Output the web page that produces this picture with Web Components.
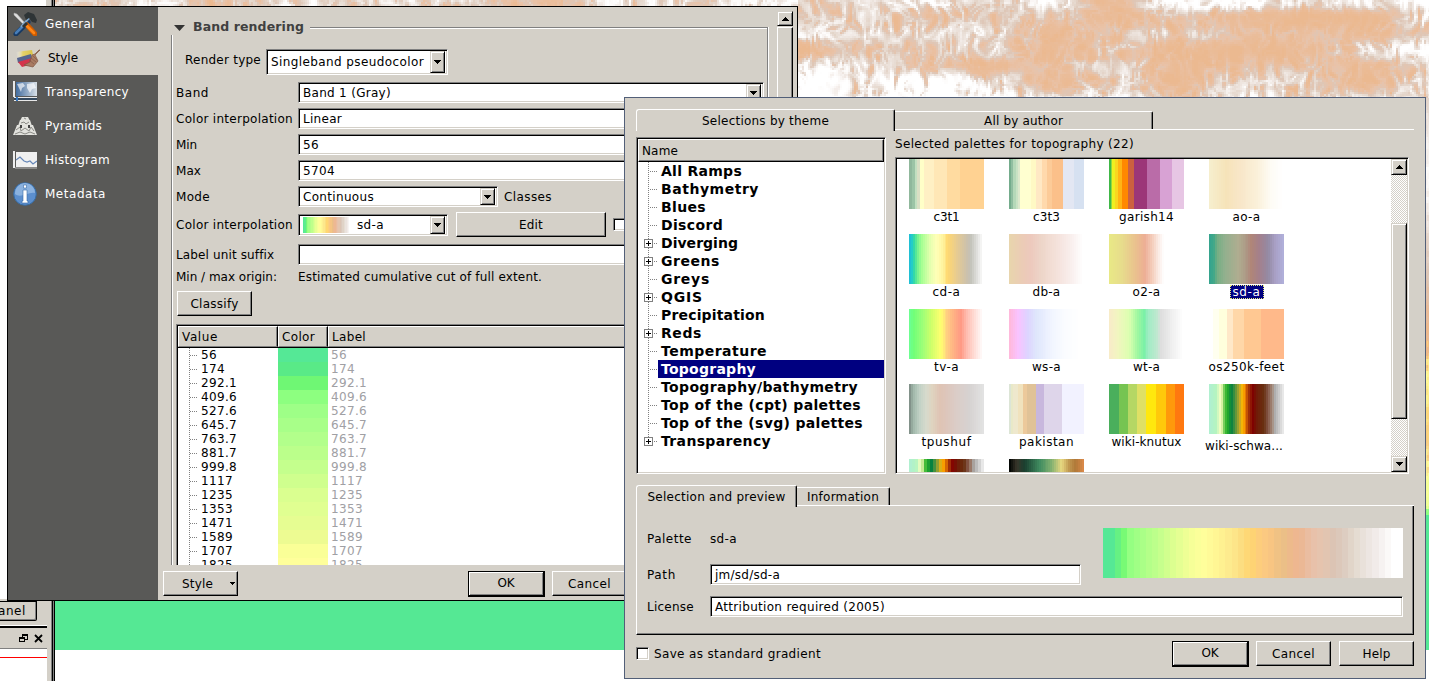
<!DOCTYPE html>
<html lang="en">
<head>
<meta charset="utf-8">
<title>Layer properties</title>
<style>
html,body{margin:0;height:100%;overflow:hidden;background:#fff}
body{font:12px/14px "DejaVu Sans",sans-serif;color:#000}
</style>
</head>
<body>
<gis-desktop></gis-desktop>
<script>
const define=(name,html,ready)=>{
  const t=document.createElement('template');t.innerHTML=html;
  customElements.define(name,class extends HTMLElement{
    connectedCallback(){
      if(this.shadowRoot)return;
      this.attachShadow({mode:'open'}).append(t.content.cloneNode(true));
      if(ready)ready.call(this,this.shadowRoot);
    }
  });
};
const SUNK='border:1px solid;border-color:#808080 #fff #fff #808080;box-shadow:inset 1px 1px #000,inset -1px -1px #d4d0c8;';
const RAISED='border:1px solid;border-color:#fff #000 #000 #fff;box-shadow:inset -1px -1px #808080;';
const hex=c=>[1,3,5].map(i=>parseInt(c.substr(i,2),16));
const sample=(stops,p)=>{
  for(let i=1;i<stops.length;i++)if(p<=stops[i][1]){
    const a=stops[i-1],b=stops[i],f=(p-a[1])/((b[1]-a[1])||1),x=hex(a[0]),y=hex(b[0]);
    return x.map((v,k)=>Math.round(v+(y[k]-v)*f));
  }
  return hex(stops[stops.length-1][0]);
};
const SDA='#55e896 0,#55e896 2,#74f973 6,#93ff82 8,#adff88 13,#c2ff8c 18,#dcff90 23,#f6ff98 29,#ffff9c 33,#fff795 37,#fde88c 43,#fcdd80 46,#ffd570 49,#fccb80 53,#f9c582 56,#eac086 60,#efb78e 64,#ebb896 67,#e9c0a8 70,#e5c6b0 74,#dcc4b4 77,#dcccc0 81,#e4dbd0 85,#eae2dc 88,#f2ecea 92,#fbfaf9 96,#ffffff 97,#ffffff 100';

/* letter-spaced label: w is its advance width in pixels */
define('fit-text','<style>:host{display:inline-block;white-space:pre;flex:none}</style><slot></slot>',function(){
  const w=+this.getAttribute('w');if(!w)return;
  const r=document.createRange();r.selectNodeContents(this);
  this.style.letterSpacing=((w-r.getBoundingClientRect().width)/this.textContent.length).toFixed(3)+'px';
});
/* colour ramp: "smooth" bands are interpolated, "hard" ones start at each stop */
define('color-ramp','<style>:host{display:block;flex:none}</style>',function(){
  const s=(this.getAttribute('stops')||SDA).split(',').map(v=>{const[a,b]=v.trim().split(' ');return[a,+b]});
  const out=[];
  if(this.hasAttribute('hard'))s.forEach((v,i)=>out.push(`${v[0]} ${v[1]}% ${i+1<s.length?s[i+1][1]:100}%`));
  else{const n=+this.getAttribute('steps')||36;
    for(let i=0;i<n;i++)out.push(`rgb(${sample(s,i/(n-1)*100)}) ${i/n*100}% ${(i+1)/n*100}%`);}
  this.style.background=`linear-gradient(90deg,${out})`;
});
define('push-button',`<style>:host{display:flex;box-sizing:border-box;align-items:center;justify-content:center;flex:none;background:#d4d0c8;${RAISED}}
:host([default]){border-color:#000;border-width:1px 2px 2px 1px;box-shadow:inset 1px 1px #fff,inset -1px -1px #808080}</style><slot></slot>`);
define('arrow-box',`<style>:host{display:flex;box-sizing:border-box;flex:none;align-items:center;justify-content:center;width:15px;background:#d4d0c8;border:1px solid;border-color:#d4d0c8 #000 #000 #d4d0c8;box-shadow:inset 1px 1px #fff,inset -1px -1px #808080}
:host([up]) svg{transform:scaleY(-1)}</style><svg width="7" height="4" shape-rendering="crispEdges"><path d="M0 0h7v1H6v1H5v1H4v1H3V3H2V2H1V1H0z"/></svg>`);
define('edit-box',`<style>:host{display:flex;box-sizing:border-box;flex:none;align-items:center;background:#fff;padding:1px 2px 1px 4px;height:21px;${SUNK}}
slot{display:flex;flex:1;align-items:center}arrow-box{align-self:stretch}</style><slot></slot>`,function(r){
  if(this.hasAttribute('combo')){const a=document.createElement('arrow-box');r.append(a)}
});
define('check-box',`<style>:host{display:block;box-sizing:border-box;flex:none;width:13px;height:13px;background:#fff;${SUNK}}</style>`);
define('expand-mark','<style>:host{display:block;width:9px;height:9px}svg{display:block}</style><svg width="9" height="9" shape-rendering="crispEdges"><path d="M0 0h9v9H0z" fill="#808080"/><path d="M1 1h7v7H1z" fill="#fff"/><path d="M2 4h5v1H2zM4 2h1v5H4z"/></svg>');
define('scroll-bar',`<style>:host{display:flex;flex-direction:column;flex:none;width:16px;background:repeating-conic-gradient(#fff 0 25%,#d4d0c8 0 50%) 0 0/2px 2px}
arrow-box{width:16px;height:16px}i{display:block;box-sizing:border-box;background:#d4d0c8;border:1px solid;border-color:#d4d0c8 #000 #000 #d4d0c8;box-shadow:inset 1px 1px #fff,inset -1px -1px #808080}</style>
<arrow-box up></arrow-box><i></i><arrow-box id="d"></arrow-box>`,function(r){
  const i=r.querySelector('i'),g=this.getAttribute('gap');
  i.style.marginTop=g+'px';i.style.height=this.getAttribute('thumb')+'px';r.getElementById('d').style.marginTop='auto';
});

/* shaded relief behind the windows */
define('relief-map','<style>:host{display:block}canvas{display:block;width:1374px;height:650px}</style><canvas width="1374" height="650"></canvas>',function(r){
  const c=r.querySelector('canvas').getContext('2d'),W=1374,H=650;
  c.fillStyle='#55e894';c.fillRect(0,0,W,H);
  const rnd=(x,y)=>{let n=(x*374761393+y*668265263)|0;n=Math.imul(n^(n>>>13),1274126177);return((n^(n>>>16))>>>0)/4294967296};
  const sm=t=>t*t*(3-2*t);
  const noise=(x,y)=>{const a=Math.floor(x),b=Math.floor(y),u=sm(x-a),v=sm(y-b);
    return (rnd(a,b)*(1-u)+rnd(a+1,b)*u)*(1-v)+(rnd(a,b+1)*(1-u)+rnd(a+1,b+1)*u)*v};
  const G=[[.35,.5,.75,.45,.75,.08,.95,.95,.6,.7,1],[.4,.5,.3,.4,.35,.05,.3,.1,0,0,.75],[.65,.6,.5,.6,.2,.3,.55,.2,.2,.15,.3],
    [.1,.3,.35,.6,.1,.4,.1,.05,.1,.6,.8],[.8,.6,.3,.05,.2,.6,.1,.25,.3,.1,.5],[1,.7,1,.7,.1,.55,.05,.5,.5,.05,.6],[.9,.7,1,.85,.5,.8,.2,.7,.5,.5,.5]];
  const base=(x,y)=>{x=Math.max(0,Math.min(9.999,x));y=Math.max(0,Math.min(5.999,y));const a=x|0,b=y|0,u=sm(x-a),v=sm(y-b);
    return (G[b][a]*(1-u)+G[b][a+1]*u)*(1-v)+(G[b+1][a]*(1-u)+G[b+1][a+1]*u)*v};
  const pal=[['#ebb990',0],['#eabd9b',18],['#e9c3a9',30],['#dec6b6',42],['#e6d9cf',55],['#f0e8e3',70],['#fcfaf9',85],['#ffffff',100]];
  const cell=(x,y,w,h,s)=>{for(let j=y;j<y+h;j+=s)for(let i=x;i<x+w;i+=s){
    const wx=i+14*noise(i/17,j/17),wy=j+12*noise(i/15+40,j/15);
    const ridge=1-Math.abs(2*noise(wx/9,wy/16)-1)*1.6,fine=1-Math.abs(2*noise(wx/4.5+9,wy/6)-1)*1.8;
    const b=i<743?.45+.5*(noise(i/50,3)-.5):base((i-743+8*noise(i/30,j/20)-4)/63.1,j/16.2);
    const v=b+(ridge-.4)*.46*(.3+b)+(fine-.3)*.26*(.3+b)+.05*(rnd(i,j)-.5);
    c.fillStyle=`rgb(${sample(pal,Math.max(0,Math.min(99,v*100)))})`;c.fillRect(i,j,s,s)}};
  cell(0,0,744,7,2);cell(743,0,631,98,2);
  const side=[['#e3d5cb',0],['#ffffff',18],['#e6d6cb',34],['#ddc6b6',43],['#ebb993',54],['#efb884',60],['#ffd57c',63],['#ffff99',68],['#fcd779',77],['#f7c980',83],['#ffff9b',89],['#eaff91',96],['#8dff80',100]];
  for(let y=98;y<514;y+=3)for(let x=1371;x<1374;x+=1){c.fillStyle=`rgb(${sample(side,Math.max(0,Math.min(100,(y-98)/4.16+9*(noise(x/2,y/6)-.5))))})`;c.fillRect(x,y,1,3)}
});

define('dock-panel',`<style>:host{display:flex;width:55px;height:681px;background:#fff}
.l{width:47px;display:flex;flex-direction:column}.w{height:599px;border-right:1px solid #d4d0c8;margin-right:0}
.tabs{height:27px;background:#d4d0c8;border-top:1px solid #d4d0c8;box-sizing:border-box;border-bottom:1px solid #fff}
.tab{box-sizing:border-box;width:37px;height:20px;margin-top:1px;border:solid #000;border-width:1px 1px 1px 0;border-bottom-right-radius:2px;box-shadow:inset -1px -1px #808080;display:flex;align-items:center;justify-content:flex-end;padding-right:10px;overflow:hidden}
.bar{box-sizing:border-box;height:23px;margin-top:0;background:#d4d0c8;border-top:2px solid #000;border-bottom:1px solid #808080;display:flex;justify-content:flex-end;align-items:center;gap:6px;padding-right:4px}
.r{height:8px;border-bottom:1px solid #f00}
.s{width:8px;background:linear-gradient(90deg,#d4d0c8 4px,#808080 4px 5px,#000 5px 6px,#808080 6px 7px,#000 7px)}</style>
<div class="l"><div class="w"></div><div class="tabs"><div class="tab"><fit-text w="28">anel</fit-text></div></div><div class="bar">
<svg width="9" height="9" shape-rendering="crispEdges" fill="none" stroke="#000"><path d="M3 1h5M3 0h5M.5 3.5h5v4h-5zM0 4h6M3 0v3M8.500 0v6M6 5.500h3"/></svg><svg width="9" height="9"><path d="M1 1l7 7M8 1L1 8" stroke="#000" stroke-width="1.8"/></svg></div><div class="r"></div></div><div class="s"></div>`);

define('nav-item',`<style>:host{display:flex;align-items:center;height:34px;box-sizing:border-box;padding:0 0 1px 5px;gap:8px;color:#fff}
:host([on]){background:#d4d0c8;color:#000;padding-left:8px}</style><slot name="i"></slot><slot></slot>`);
define('nav-list',`<style>:host{display:block;width:150px;flex:none;background:#595957}svg{display:block;width:24px;height:24px;flex:none}</style>
<nav-item><svg slot="i" viewBox="0 0 24 24"><path d="M1 1l3 1 8 9-2 1L1 3z" fill="#ddd" stroke="#aaa" stroke-width=".5"/><path d="M15 10L3 22" stroke="#173963" stroke-width="5" stroke-linecap="round"/><path d="M10 14l-7 7" stroke="#477db8" stroke-width="2.600" stroke-linecap="round"/><path d="M8 15l9-10" stroke="#7fa5c8" stroke-width="2"/><path d="M11 3l4-3 6 2 3 6-1 3-4-1-3-4-3 2z" fill="#2e3436"/><path d="M14 13l8 9" stroke="#ce5c00" stroke-width="5" stroke-linecap="round"/><path d="M14 14l7 7" stroke="#ff8515" stroke-width="2.600" stroke-linecap="round"/><path d="M10 15l4-4" stroke="#2e3436" stroke-width="3"/></svg><fit-text w="50">General</fit-text></nav-item>
<nav-item on><svg slot="i" viewBox="0 0 24 24"><defs><linearGradient id="f"><stop stop-color="#fff" stop-opacity="0"/><stop offset=".4" stop-color="#e5d16b"/><stop offset="1" stop-color="#d8c246"/></linearGradient></defs><path d="M0 6l16-2 1 5-15 4z" fill="url(#f)"/><path d="M1 12l14-4 1 5-14 4z" fill="#56658f"/><path d="M2 16l14-4 1 6-11 3z" fill="#d4344b"/><path d="M24 4l-5 5 3 6-5 6-9-2 6-3 2-7 3-1 4-4z" fill="#a97b62" stroke="#7d5540" stroke-width=".7"/><path d="M15 12l5 4M13 14l5 4M17 10l4 4" stroke="#815a47" stroke-width=".7"/></svg><fit-text w="30" style="margin-left:-0px">Style</fit-text></nav-item>
<nav-item><svg slot="i" viewBox="0 0 24 24"><defs><linearGradient id="m"><stop stop-color="#426c9e"/><stop offset="1" stop-color="#d9e0e6"/></linearGradient></defs><path d="M0 1h2v16H0zM1 17h23v4H1z" fill="#e8e8e8"/><path d="M3 2h21v14H3z" fill="url(#m)"/><path d="M4 4l6-1 2 3-3 2-1 4-2-4zM14 4l7-1 2 5-4 1-2 4-3-5z" fill="#fff" opacity=".65"/><path d="M1 18h23v2H1z" fill="#34495e"/><path d="M3 17h2v4H3z" fill="#3675bc"/></svg><fit-text w="84">Transparency</fit-text></nav-item>
<nav-item><svg slot="i" viewBox="0 0 24 24"><path d="M4 11h16l4 10H0zM7 6h10l2 6H5zM9 3h6l2 4H7z" fill="#e2e2dd"/><path d="M3 16l4-3 1 4 4-3 4 3 2-4 3 4M8 9l3-1 2 2 3-2M2 20l5-2 5 2 5-2 5 2M11 4l2 1" fill="none" stroke="#8b8b86"/><path d="M7 11h2v3H7zM15 11h2v3h-2z" fill="#444"/></svg><fit-text w="57">Pyramids</fit-text></nav-item>
<nav-item><svg slot="i" viewBox="0 0 24 24"><path d="M0 3h2v17H0z" fill="#eee"/><path d="M3 4h21v15H3z" fill="#f0f0f0"/><path d="M2 20h22" stroke="#bbb"/><path d="M3 12l4-3 4 4 3 1 3-1 3 3 4-3" fill="none" stroke="#6788b8" stroke-width="1.200"/></svg><fit-text w="65">Histogram</fit-text></nav-item>
<nav-item><svg slot="i" viewBox="0 0 24 24"><circle cx="12" cy="12" r="11.300" fill="#5c8fce" stroke="#376a9f"/><path d="M2 12C2 5 7 1 12 1s10 4 10 10C16 9 8 17 2 12z" fill="#8bb2df"/><path d="M10.500 3h3v3h-3zM10 8h4v11h1v2H9v-2h1z" fill="#fff" stroke="#3a6ca8" stroke-width=".6"/></svg><fit-text w="61">Metadata</fit-text></nav-item>`);

define('class-table',`<style>:host{display:flex;flex-direction:column;box-sizing:border-box;width:460px;height:241px;background:#fff;border:1px solid #808080;border-width:1px 0 0 1px;box-shadow:inset 1px 1px #000;padding:1px 0 0 1px;overflow:hidden}
.h{display:flex;flex:none;height:22px;border-bottom:1px solid #000;box-sizing:border-box}
.h div{box-sizing:border-box;background:#d4d0c8;border:1px solid;border-color:#fff #000 #808080 #fff;box-shadow:inset -1px 0 #808080;padding:3px 0 0 3px}
.r{display:flex;height:14px;flex:none;align-items:center}.t{width:23px;height:14px;margin-right:0;background:repeating-linear-gradient(#808080 0 1px,transparent 1px 2px) 11px 0/1px 14px no-repeat,repeating-linear-gradient(90deg,#808080 0 1px,transparent 1px 2px) 12px 7px/8px 1px no-repeat}
.v{width:77px}.c{width:50px;height:14px}.g{color:#a0a0a4;padding-left:3px}</style>
<div class="h"><div style="width:100px"><fit-text w="36">Value</fit-text></div><div style="width:50px"><fit-text w="33">Color</fit-text></div><div style="flex:1"><fit-text w="34">Label</fit-text></div></div>`,function(r){
  '56 174 292.1 409.6 527.6 645.7 763.7 881.7 999.8 1117 1235 1353 1471 1589 1707 1825'.split(' ').forEach((v,i)=>{
    const c='55e896 59ea87 6ff774 8dff80 9eff87 a8ff89 b2ff8b bbff8b c4ff8d cfff8e daff90 e0ff91 e6fd92 edfb92 faff97 ffff9b'.split(' ')[i];
    const w=v.length*8-(v.includes('.')?4:0),d=document.createElement('div');d.className='r';
    d.innerHTML=`<div class="t"></div><div class="v"><fit-text w="${w}">${v}</fit-text></div><div class="c" style="background:#${c}"></div><div class="g"><fit-text w="${w}">${v}</fit-text></div>`;
    r.append(d);});
});

define('properties-window',`<style>:host{display:flex;box-sizing:border-box;width:791px;height:595px;border:1px solid #000;background:#d4d0c8}
.m{flex:1;display:flex;flex-direction:column;min-width:0}
.s{display:flex;height:558px;overflow:hidden;padding-left:13px}
.g{width:597px;flex:none;position:relative}
.g:before{content:"";position:absolute;left:0;top:28px;bottom:0;width:1px;background:#808080;border-right:1px solid #fff}
.top{display:flex;align-items:center;height:40px;box-sizing:border-box;padding-left:3px}
.top svg{margin-right:8px}.top b{color:#404040;font-size:12.500px}
.line{flex:1;height:20px;margin:20px 0 0 6px;border:solid #808080;border-width:1px 1px 0 0;box-shadow:1px 0 #fff,inset 0 1px #fff}
.f{display:flex;align-items:center;padding-left:5px}.f>fit-text:first-child{box-sizing:border-box;width:122px}
.side{position:absolute;right:0;top:40px;height:518px;width:1px;background:#808080;box-shadow:1px 0 #fff}
.sc{width:16px;margin:4px 0 0 9px;display:flex;flex-direction:column}.sc arrow-box{height:15px;width:16px}.sc i{flex:1;box-sizing:border-box;border:1px solid;border-color:#fff #000 #000 #fff;box-shadow:inset -1px 0 #808080;margin-top:1px}
.b{display:flex;height:35px;box-sizing:border-box;align-items:center;padding:2px 0 0 5px}</style>
<nav-list></nav-list><div class="m"><div class="s"><div class="g">
<div class="top"><svg width="11" height="7"><path d="M0 1h11L5.500 7z" fill="#333"/></svg><b><fit-text w="111">Band rendering</fit-text></b><span class="line"></span></div>
<div class="f" style="padding-left:14px;margin-top:2px;height:26px"><fit-text w="76" style="width:81px;margin-top:-4px">Render type</fit-text><edit-box combo style="width:182px;height:26px"><fit-text w="153">Singleband pseudocolor</fit-text></edit-box></div>
<div class="f" style="margin-top:7px;height:21px"><fit-text w="33">Band</fit-text><edit-box combo style="width:466px"><fit-text w="88">Band 1 (Gray)</fit-text></edit-box></div>
<div class="f" style="margin-top:5px;height:21px"><fit-text w="117">Color interpolation</fit-text><edit-box style="width:466px"><fit-text w="39">Linear</fit-text></edit-box></div>
<div class="f" style="margin-top:5px;height:21px"><fit-text w="21">Min</fit-text><edit-box style="width:466px"><fit-text w="16">56</fit-text></edit-box></div>
<div class="f" style="margin-top:5px;height:21px"><fit-text w="25">Max</fit-text><edit-box style="width:466px"><fit-text w="32">5704</fit-text></edit-box></div>
<div class="f" style="margin-top:5px;height:21px"><fit-text w="34">Mode</fit-text><edit-box combo style="width:200px"><fit-text w="71">Continuous</fit-text></edit-box><fit-text w="48" style="margin-left:6px">Classes</fit-text></div>
<div class="f" style="margin-top:5px;height:25px"><fit-text w="117">Color interpolation</fit-text><edit-box combo style="width:150px;height:22px"><color-ramp style="width:49px;height:16px;margin-right:5px"></color-ramp><fit-text w="27">sd-a</fit-text></edit-box><push-button style="margin-left:8px;width:150px;height:25px"><fit-text w="24">Edit</fit-text></push-button><check-box style="margin-left:7px"></check-box></div>
<div class="f" style="margin-top:7px;height:21px"><fit-text w="98">Label unit suffix</fit-text><edit-box style="width:466px"></edit-box></div>
<div class="f" style="margin-top:5px;height:14px"><fit-text w="101">Min / max origin:</fit-text><fit-text w="244">Estimated cumulative cut of full extent.</fit-text></div>
<div class="f" style="margin-top:7px;padding-left:6px"><push-button style="width:75px;height:25px"><fit-text w="48" style="width:auto">Classify</fit-text></push-button></div>
<class-table style="margin:8px 0 0 5px"></class-table><div class="side"></div></div>
<div class="sc"><arrow-box up></arrow-box><i></i></div></div>
<div class="b"><push-button style="width:75px;height:25px"><fit-text w="31" style="margin-left:6px">Style</fit-text><svg style="margin:0 -10px 0 17px" width="5" height="3" shape-rendering="crispEdges"><path d="M0 0h5v1H4v1H3v1H2V2H1V1H0z"/></svg></push-button><push-button default style="margin-left:230px;width:77px;height:26px"><fit-text w="17">OK</fit-text></push-button><push-button style="margin-left:7px;width:75px;height:25px"><fit-text w="43">Cancel</fit-text></push-button></div></div>`);

/* tab strip: the first tab is the current one */
define('tab-strip',`<style>:host{display:flex;height:21px;align-items:flex-end;position:relative}
::slotted(*){box-sizing:border-box;display:flex!important;align-items:center;justify-content:center;height:18px;border:solid #fff;border-width:1px 0 0;border-right:1px solid #000;border-top-right-radius:2px;box-shadow:inset -1px 0 #808080;margin-bottom:1px}
::slotted(:first-child){height:22px;margin-bottom:-1px;border-left:1px solid #fff;border-top-left-radius:3px}
i{flex:1;height:0}:host:after{content:""}.l{position:absolute;bottom:0;right:0;height:1px;background:#fff}</style><slot></slot><div class="l"></div>`,function(r){
  r.querySelector('.l').style.left=this.getAttribute('first')+'px';
});
define('theme-tree',`<style>:host{display:block;box-sizing:border-box;width:250px;height:337px;background:#fff;${SUNK}padding:1px;overflow:hidden}
.h{box-sizing:border-box;height:23px;background:#d4d0c8;border:1px solid;border-color:#fff #000 #000 #fff;box-shadow:inset -1px -1px #808080;padding:4px 0 0 3px}
.r{display:flex;height:18px;font-weight:bold;font-size:14px;line-height:18px}
.t{position:relative;width:20px;flex:none;background:repeating-linear-gradient(#808080 0 1px,transparent 1px 2px) 10px 0/1px 18px no-repeat,repeating-linear-gradient(90deg,#808080 0 1px,transparent 1px 2px) 12px 9px/8px 1px no-repeat}
.t expand-mark{position:absolute;left:6px;top:5px}
.r:last-child .t{background-size:1px 10px,8px 1px}.x{flex:1;padding-left:3px}.on .x{background:#000080;color:#fff}</style><div class="h"><fit-text w="36">Name</fit-text></div>`,function(r){
  'All Ramps:81,Bathymetry:98,Blues:45,Discord:62,+Diverging:77,+Greens:59,Greys:49,+QGIS:42,Precipitation:104,+Reds:41,Temperature:106,Topography:95,Topography/bathymetry:197,Top of the (cpt) palettes:200,Top of the (svg) palettes:202,+Transparency:110'.split(',').forEach(s=>{
    const e=s[0]=='+';if(e)s=s.slice(1);const[n,w]=s.split(':'),d=document.createElement('div');d.className='r'+(n=='Topography'?' on':'');
    d.innerHTML=`<div class="t">${e?'<expand-mark></expand-mark>':''}</div><div class="x"><fit-text w="${w}">${n}</fit-text></div>`;r.append(d)});
});
define('palette-card',`<style>:host{display:flex;flex-direction:column;align-items:center;width:75px;height:75px}.n{margin-top:1px;display:flex;justify-content:center;white-space:nowrap}
:host([on]) .n{background:#000080;color:#fff;outline:1px dotted #e8e87c;outline-offset:-1px;padding:0 3px}</style><color-ramp></color-ramp><div class="n"><slot></slot></div>`);
const SCHWA='#b0f0d0 0,#b4f4c0 8,#ffffc0 15,#50c040 20,#28b028 23,#058040 29,#409040 33,#c0a828 40,#ffb800 44,#f08000 48,#a03008 54,#800000 59,#701c08 65,#683010 74,#805040 79,#a89080 86,#a8a8a8 88,#e8e8e8 100';
const P=[['c3t1',26,'#90b89c 0,#9cc4a6 4,#c2dfc0 8,#dadfc4 11,#ffffc8 14,#fff0c4 20,#ffe7b6 33,#ffdba0 51,#ffd292 68',1],
['c3t3',27,'#74ac8c 0,#90bea0 3,#b4d8b8 6,#c8e2c4 9,#dce8cc 12,#ffffd0 15,#fff9c4 29,#ffe8c4 36,#ffd9ac 44,#fccb98 51,#fbc08a 57,#e3e7f3 72,#d6e1f1 87',1],
['garish14',55,'#40b848 0,#90d840 2,#eef020 4,#f9d620 8,#ffb414 12,#ff8800 17,#cc6040 25,#9c3678 33,#ba6ca8 51,#d8a2d4 68,#e7c6e4 84',1],
['ao-a',28,'#f6eecd 0,#f6e3b9 22,#f8e6c8 40,#faf0d9 65,#fefcf5 84,#ffffff 100'],
['cd-a',28,'#20c0d4 0,#20c8d0 2,#38dca0 6,#70f090 10,#a0ff90 15,#e8ffb0 28,#ffffb8 36,#fff39c 45,#ffd870 52,#e8cc90 64,#c8c0b0 80,#c4c4bc 84,#dcdcd8 91,#ffffff 100'],
['db-a',28,'#e8d5ad 0,#ebccb5 15,#edc9bd 28,#edd5c8 42,#f4e1da 64,#f9eeec 83,#ffffff 100'],
['o2-a',28,'#e8e886 0,#e7db8c 17,#eac08e 35,#edad95 48,#f4ccb9 58,#fbebe5 67,#ffffff 74,#ffffff 100'],
['sd-a',28,'#36a48e 0,#40a888 5,#76ae83 10,#92b08e 20,#afad90 38,#ad9684 51,#b08578 57,#a4808c 68,#948aa4 80,#a89fc4 89,#b0afd9 100'],
['tv-a',25,'#6cff90 0,#70ff78 5,#9dff78 17,#cfff6a 29,#ffff70 42,#ffd880 49,#ffbb84 57,#ff9984 70,#ffbcb0 78,#ffe2dc 90,#ffffff 100'],
['ws-a',29,'#ffb9dc 0,#f9c3ff 11,#ddd4ff 24,#dfe6fc 35,#f1f5ff 58,#fafcff 75,#ffffff 96,#ffffff 100'],
['wt-a',27,'#f8ecc8 0,#f2f5c0 10,#dcffb0 26,#a0f8a0 37,#78f0a8 47,#a0ecc4 53,#c0e8d0 65,#dedede 70,#f0f0f0 86,#ffffff 100'],
['os250k-feet',76,'#ffffff 0,#ffffef 6,#ffffdc 14,#ffe8c8 24,#ffd7a8 32,#ffc892 47,#ffb98a 69',1],
['tpushuf',50,'#82928a 0,#9eb6a8 4,#c2d2c6 13,#d7dacc 22,#dfd4c0 30,#dfc4b4 40,#ddc5ba 49,#dbcdc8 65,#d6d2d1 82,#e2e2e2 100'],
['pakistan',55,'#dce5d6 0,#e8e9c8 3,#eee8cd 6,#f0e2bd 12,#ecc99b 19,#e0c297 24,#c8b7dd 36,#ded5ea 47,#f2f2ff 71',1],
['wiki-knutux',70,'#4aaf5c 0,#76c452 13,#b5d764 25,#dfe065 38,#ffe80e 50,#ffc90b 63,#ff990b 76,#ff780f 88',1],
['wiki-schwa...',78,SCHWA],['',0,SCHWA],['',0,'#050805 0,#38352a 9,#1a4030 20,#408c60 40,#80b070 57,#e8d880 71,#c09850 81,#b07838 90,#d88848 100']];
define('palette-gallery',`<style>:host{display:flex;box-sizing:border-box;width:514px;height:317px;background:#fff;${SUNK}padding:1px;overflow:hidden}
.g{flex:1;display:grid;grid-template-columns:repeat(4,75px);grid-auto-rows:75px;column-gap:25px;padding-left:12px;overflow:hidden}
color-ramp{width:75px;height:50px}</style><div class="g"></div><scroll-bar gap="48" thumb="196"></scroll-bar>`,function(r){
  const g=r.querySelector('.g');
  P.forEach((p,i)=>{const d=document.createElement('palette-card');if(p[0]=='sd-a')d.setAttribute('on','');
    d.innerHTML=p[0]?`<fit-text w="${p[1]}">${p[0]}</fit-text>`:'';g.append(d);
    const c=d.shadowRoot.querySelector('color-ramp');
    const n=document.createElement('color-ramp');n.setAttribute('stops',p[2]);if(p[3])n.setAttribute('hard','');n.setAttribute('steps',i==16?'25':'38');
    n.style.cssText='width:75px;height:50px';c.replaceWith(n);
    if(i==15)d.shadowRoot.querySelector('.n').style.cssText='margin:5px 5px 0 0';});
});

define('palette-window',`<style>:host{display:flex;flex-direction:column;box-sizing:border-box;width:802px;height:582px;border:1px solid #525f78;background:#d4d0c8;padding:11px 11px 0}
.cols{display:flex;gap:9px;margin-top:7px}.rt{display:flex;flex-direction:column;padding-top:0}
.pre{display:flex;box-sizing:border-box;height:129px;width:778px;border:solid;border-color:#fff #000 #000 #fff;border-width:0 1px 1px 1px;box-shadow:inset -1px -1px #808080;padding:22px 10px 0}
.form{width:434px;flex:none}.f{display:flex;align-items:center;height:21px}.f>fit-text:first-child{width:63px}
.bot{display:flex;align-items:center;height:27px;margin-top:5px}.bot .sp{flex:1}</style>
<tab-strip first="259" style="width:778px"><div style="width:259px"><fit-text w="127">Selections by theme</fit-text></div><div style="width:258px"><fit-text w="79">All by author</fit-text></div></tab-strip>
<div class="cols"><theme-tree></theme-tree><div class="rt"><fit-text w="239" style="height:20px">Selected palettes for topography (22)</fit-text><palette-gallery></palette-gallery></div></div>
<tab-strip first="161" style="width:778px;margin-top:11px"><div style="width:161px"><fit-text w="138">Selection and preview</fit-text></div><div style="width:93px"><fit-text w="72">Information</fit-text></div></tab-strip>
<div class="pre"><div class="form"><div class="f"><fit-text w="45">Palette</fit-text><fit-text w="27">sd-a</fit-text></div><div class="f" style="margin-top:15px"><fit-text w="29">Path</fit-text><edit-box style="width:371px"><fit-text w="65">jm/sd/sd-a</fit-text></edit-box></div><div class="f" style="margin-top:11px"><fit-text w="47">License</fit-text><edit-box style="width:693px"><fit-text w="170">Attribution required (2005)</fit-text></edit-box></div></div>
<color-ramp steps="49" style="width:300px;height:50px;margin-left:22px"></color-ramp></div>
<div class="bot"><check-box></check-box><fit-text w="167" style="margin-left:5px">Save as standard gradient</fit-text><span class="sp"></span><push-button default style="width:77px;height:26px"><fit-text w="17">OK</fit-text></push-button><push-button style="margin-left:7px;width:75px;height:25px"><fit-text w="43">Cancel</fit-text></push-button><push-button style="margin-left:8px;width:75px;height:25px"><fit-text w="28">Help</fit-text></push-button></div>`);

define('gis-desktop',`<style>:host{display:flex;position:relative;width:1429px;height:681px;overflow:hidden;background:#fff}
properties-window,palette-window{position:absolute}properties-window{left:7px;top:6px}palette-window{left:624px;top:97px}</style>
<dock-panel></dock-panel><relief-map></relief-map><properties-window></properties-window><palette-window></palette-window>`);
</script>
</body>
</html>
